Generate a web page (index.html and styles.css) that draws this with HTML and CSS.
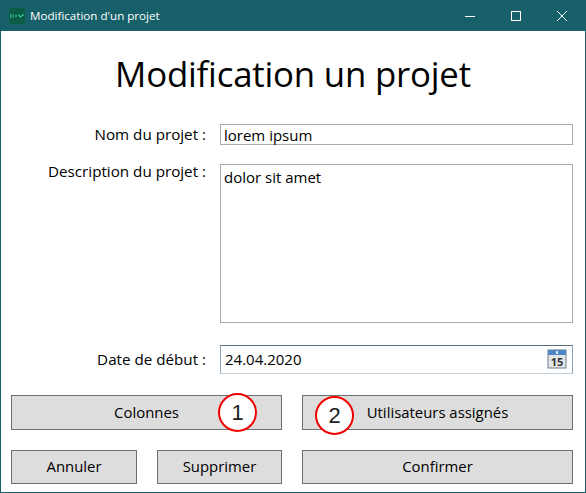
FILE: index.html
```html
<!DOCTYPE html>
<html lang="fr">
<head>
    <meta charset="UTF-8">
    <title>Modification d'un projet</title>
    <link rel="stylesheet" href="styles.css">
</head>
<body>
    <div class="window">
        <div class="titlebar">
            <svg class="app-icon" width="16" height="16" viewBox="0 0 16 16">
                <rect width="16" height="16" rx="2" fill="#0b5c45"/>
                <path d="M1 7h2M1 9h2M4 7h1M4 9h1M6 8h2M9 7h1l1 2h1l1-2h2" stroke="#35e6a0" stroke-width="1" fill="none"/>
            </svg>
            <span class="title">Modification d'un projet</span>
            <div class="controls">
                <svg width="46" height="30" viewBox="0 0 46 30"><path d="M18 15.5h10" stroke="#fff" fill="none"/></svg>
                <svg width="46" height="30" viewBox="0 0 46 30"><rect x="18.5" y="10.5" width="9" height="9" stroke="#fff" fill="none"/></svg>
                <svg width="46" height="30" viewBox="0 0 46 30"><path d="M18 10l10 10M28 10l-10 10" stroke="#fff" fill="none"/></svg>
            </div>
        </div>

        <div class="content">
            <h1>Modification un projet</h1>

            <div class="form">
                <label class="lbl">Nom du projet :</label>
                <div class="field field-name">lorem ipsum</div>

                <label class="lbl lbl-desc">Description du projet :</label>
                <div class="field field-desc">dolor sit amet</div>

                <label class="lbl lbl-date">Date de début :</label>
                <div class="field field-date">
                    <span>24.04.2020</span>
                    <svg width="20" height="20" viewBox="0 0 20 20">
                        <rect x="1" y="1" width="18" height="18" fill="#e4e7ea" stroke="#6f7c88"/>
                        <rect x="1" y="1" width="18" height="5" fill="#4f86c6"/>
                        <rect x="9" y="2" width="2" height="3" fill="#dfeaf6"/>
                        <text x="10" y="16.5" class="cal-day">15</text>
                    </svg>
                </div>
            </div>

            <div class="buttons">
                <button class="btn btn-wide">Colonnes</button>
                <button class="btn btn-wide">Utilisateurs assignés</button>
                <button class="btn btn-low">Annuler</button>
                <button class="btn btn-low">Supprimer</button>
                <button class="btn btn-wide btn-low">Confirmer</button>
            </div>
        </div>

        <!-- annotations posees sur la capture -->
        <span class="marker marker-1">1</span>
        <span class="marker marker-2">2</span>
    </div>
</body>
</html>
```

FILE: styles.css
```css
:root {
    --color-frame: #17606a;
    --color-button: #dddddd;
    --color-button-border: #707070;
    --color-input-border: #ababab;
}

* {
    box-sizing: border-box;
}

html, body {
    margin: 0;
    height: 100%;
}

body {
    font-family: 'Open Sans', 'Noto Sans', sans-serif;
    color: #000;
    background-color: #fff;
}

.window {
    position: relative;
    width: 586px;
    height: 493px;
    border: 1px solid var(--color-frame);
    border-top: none;
    overflow: hidden;
}

.titlebar {
    display: flex;
    align-items: center;
    height: 31px;
    padding-left: 9px;
    margin: 0 -1px;
    background-color: var(--color-frame);
    color: #fff;
}

.app-icon {
    flex: none;
}

.title {
    margin-left: 5px;
    font-size: 11.6px;
}

.controls {
    display: flex;
    margin-left: auto;
    padding-right: 1px;
}

.controls svg {
    display: block;
}

h1 {
    margin: 0;
    height: 93px;
    padding-top: 17px;
    font-size: 34.8px;
    line-height: 52px;
    font-weight: 400;
    text-align: center;
    letter-spacing: -0.2px;
}

.form {
    display: grid;
    grid-template-columns: 205px 353px;
    column-gap: 14px;
    font-size: 15px;
}

.lbl {
    font-size: 15.2px;
    text-align: right;
    line-height: 20px;
    height: 20px;
}

.field {
    border: 1px solid var(--color-input-border);
    padding-left: 3px;
    line-height: 20px;
}

.field-name {
    height: 21px;
    margin-bottom: 19px;
}

.lbl-desc {
    margin-top: -3px;
}

.field-desc {
    height: 159px;
    padding-top: 2px;
    margin-bottom: 22px;
}

.lbl-date {
    margin-top: 4px;
}

.field-date {
    display: flex;
    align-items: center;
    justify-content: space-between;
    height: 29px;
    padding: 0 5px 2px 4px;
    border-color: #5a7183 #8ea3b3 #c5d2dd;
}

.cal-day {
    font-size: 11px;
    font-weight: 700;
    text-anchor: middle;
    fill: #333;
}

.buttons {
    display: grid;
    grid-template-columns: 126px 125px 271px;
    grid-template-rows: 35px 34px;
    column-gap: 20px;
    row-gap: 20px;
    margin: 21px 0 0 10px;
}

.btn {
    padding: 0 0 1px;
    border: 1px solid var(--color-button-border);
    background-color: var(--color-button);
    font-family: inherit;
    font-size: 14.9px;
    color: #000;
}

.btn-low {
    padding-bottom: 3px;
}

.btn-wide:first-child {
    grid-column: 1 / 3;
}

.marker {
    position: absolute;
    width: 39px;
    height: 39px;
    border: 2px solid #f00000;
    border-radius: 50%;
    background-color: #fff;
    font-family: 'Liberation Sans', sans-serif;
    font-size: 22px;
    line-height: 36px;
    text-align: center;
    color: #222;
}

.marker-1 {
    left: 217px;
    top: 393px;
}

.marker-2 {
    left: 314px;
    top: 396px;
}
```
